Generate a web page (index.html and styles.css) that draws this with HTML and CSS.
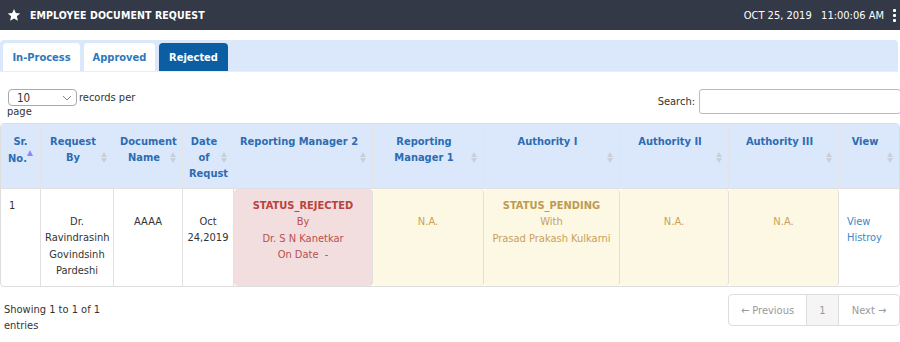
FILE: index.html
```html
<!DOCTYPE html>
<html>
<head>
<meta charset="utf-8">
<link rel="stylesheet" href="styles.css">
</head>
<body>
<header class="topbar">
  <div class="title">
    <svg class="star" width="14" height="14" viewBox="0 0 24 24"><path d="M12 1.5l3.1 7.1 7.6.7-5.8 5 1.8 7.5L12 17.8l-6.7 4 1.8-7.5-5.8-5 7.6-.7z" fill="#fff"/></svg>
    <span>EMPLOYEE DOCUMENT REQUEST</span>
  </div>
  <div class="right">
    <span class="date">OCT 25, 2019&nbsp;&nbsp; 11:00:06 AM</span>
    <span class="kebab"><i></i><i></i><i></i></span>
  </div>
</header>

<nav class="tabs">
  <a class="tab">In-Process</a>
  <a class="tab">Approved</a>
  <a class="tab active">Rejected</a>
</nav>

<div class="controls">
  <div class="length">
    <div class="lenrow">
      <span class="select">10<svg width="10" height="6" viewBox="0 0 10 6"><path d="M1 1l4 4 4-4" fill="none" stroke="#888" stroke-width="1"/></svg></span>
      <span>records per</span>
    </div>
    <div class="pageword">page</div>
  </div>
  <div class="search">
    <label>Search:</label>
    <span class="input"></span>
  </div>
</div>

<table class="grid">
  <colgroup>
    <col style="width:40px"><col style="width:73px"><col style="width:69px"><col style="width:51px"><col style="width:139px"><col style="width:111px"><col style="width:136px"><col style="width:109px"><col style="width:110px"><col style="width:60px">
  </colgroup>
  <thead>
    <tr>
      <th class="sorted">Sr.<br>No.<span class="up"></span></th>
      <th class="sort">Request<br>By</th>
      <th class="sort">Document<br>Name</th>
      <th class="sort">Date<br>of<br>Requst</th>
      <th class="sort nowrap">Reporting Manager 2</th>
      <th class="sort">Reporting<br>Manager 1</th>
      <th class="sort">Authority I</th>
      <th class="sort">Authority II</th>
      <th class="sort">Authority III</th>
      <th class="sort">View</th>
    </tr>
  </thead>
  <tbody>
    <tr>
      <td class="left">1</td>
      <td class="gap">Dr.<br>Ravindrasinh<br>Govindsinh<br>Pardeshi</td>
      <td class="gap">AAAA</td>
      <td class="gap">Oct<br>24,2019</td>
      <td class="danger"><b>STATUS_REJECTED</b><br>By<br>Dr. S N Kanetkar<br>On Date&nbsp; -</td>
      <td class="warn gap">N.A.</td>
      <td class="warn"><b>STATUS_PENDING</b><br>With<br>Prasad Prakash Kulkarni</td>
      <td class="warn gap">N.A.</td>
      <td class="warn gap">N.A.</td>
      <td class="left gap"><a class="link">View<br>Histroy</a></td>
    </tr>
  </tbody>
</table>

<div class="footer">
  <div class="info">Showing 1 to 1 of 1<br>entries</div>
  <div class="pager">
    <span class="pg">&larr; Previous</span>
    <span class="pg cur">1</span>
    <span class="pg">Next &rarr;</span>
  </div>
</div>
</body>
</html>
```

FILE: styles.css
```css
* { box-sizing: border-box; }
body {
  margin: 0;
  font-family: "DejaVu Sans Condensed", "DejaVu Sans", sans-serif;
  font-size: 11px;
  color: #333;
  background: #fff;
  width: 900px;
}
.topbar {
  height: 30px;
  background: #333946;
  color: #fff;
  display: flex;
  align-items: center;
  justify-content: space-between;
  padding: 0 4px 0 7px;
}
.title { display: flex; align-items: center; gap: 9px; font-weight: bold; font-size: 10.5px; letter-spacing: 0.1px; }
.star { margin-top: -1px; }
.right { display: flex; align-items: center; gap: 9px; }
.date { font-size: 11px; }
.kebab { display: flex; flex-direction: column; gap: 2px; }
.kebab i { width: 3px; height: 3px; background: #fff; border-radius: 1px; display: block; }

.tabs {
  margin: 10px 2px 0 0;
  height: 32px;
  background: #dbe8fb;
  border-radius: 4px 4px 0 0;
  display: flex;
  align-items: flex-end;
  padding-left: 3px;
  gap: 4px;
  border-bottom: 1px solid #e8eef7;
}
.tab {
  height: 28px;
  background: #fff;
  border-radius: 4px 4px 0 0;
  color: #2c78bd;
  font-weight: bold;
  font-size: 11px;
  display: flex;
  align-items: center;
  justify-content: center;
}
.tab:nth-child(1) { width: 77px; }
.tab:nth-child(2) { width: 71px; }
.tab.active { width: 69px; background: #0c5ea3; color: #fff; }

.controls {
  display: flex;
  justify-content: space-between;
  align-items: flex-start;
  padding: 17px 0 0 8px;
  height: 51px;
}
.lenrow { display: flex; align-items: center; gap: 2px; }
.select {
  width: 69px;
  height: 17px;
  border: 1px solid #aaa;
  border-radius: 4px;
  display: flex;
  align-items: center;
  justify-content: space-between;
  padding: 0 4px 0 8px;
  font-size: 11.5px;
}
.pageword { margin-left: -1px; margin-top: -1px; }
.search { display: flex; align-items: center; gap: 4px; margin-top: 0; }
.input { width: 202px; height: 25px; border: 1px solid #bbb; border-radius: 3px; margin-right: -1px; }

.grid {
  width: 898px;
  table-layout: fixed;
  border-collapse: separate;
  border-spacing: 0;
  border: 1px solid #dedede;
  border-radius: 4px;
}
.grid th {
  background: #dbe8fb;
  color: #2d6cb2;
  font-weight: bold;
  font-size: 11px;
  line-height: 16px;
  height: 65px;
  vertical-align: top;
  padding: 10px 14px 0 6px;
  text-align: center;
  border-right: 1px solid #e4e4e4;
  border-bottom: 1px solid #e0e0e0;
  position: relative;
}
.grid th.nowrap { white-space: nowrap; padding-left: 2px; padding-right: 10px; }
.grid th:last-child, .grid td:last-child { border-right: 0; }
.grid th:first-child { border-top-left-radius: 4px; padding: 10px 4px 0 4px; }
.grid th.sort::before {
  content: "";
  position: absolute;
  right: 6px;
  top: 34px;
  border-left: 3.5px solid transparent;
  border-right: 3.5px solid transparent;
  border-top: 5px solid #c9cfd8;
}
.grid th.sort::after {
  content: "";
  position: absolute;
  right: 6px;
  top: 28px;
  border-left: 3.5px solid transparent;
  border-right: 3.5px solid transparent;
  border-bottom: 5px solid #c9cfd8;
  height: 0;
  width: 0;
}
.up {
  display: inline-block;
  width: 0; height: 0;
  border-left: 3.5px solid transparent;
  border-right: 3.5px solid transparent;
  border-bottom: 6px solid #8c8cf0;
  vertical-align: 6px;
}
.grid td {
  height: 97px;
  vertical-align: top;
  text-align: center;
  line-height: 16.3px;
  padding: 9px 4px 0 4px;
  border-right: 1px solid #e0e0e0;
}
.grid td.gap { padding-top: 25px; }
.grid td.left { text-align: left; padding-left: 8px; }
.grid td.danger { background: #f2dede; color: #b9504c; border-radius: 4px; }
.grid td.danger b { color: #b9433f; }
.grid td.warn { background: #fcf8e3; color: #c8a15c; border-radius: 4px; }
.grid td.warn b { color: #c09a4e; }
.link { color: #3b88c8; }

.footer {
  display: flex;
  justify-content: space-between;
  align-items: flex-start;
  padding: 7px 0 0 4px;
}
.info { line-height: 16px; padding-top: 8px; }
.pager {
  display: flex;
  border: 1px solid #ddd;
  border-radius: 4px;
  height: 32px;
  color: #999;
  overflow: hidden;
}
.pg { display: flex; align-items: center; justify-content: center; border-right: 1px solid #ddd; }
.pg:nth-child(1) { width: 78px; }
.pg.cur { width: 32px; background: #f5f5f5; }
.pg:last-child { width: 60px; border-right: 0; }
```
